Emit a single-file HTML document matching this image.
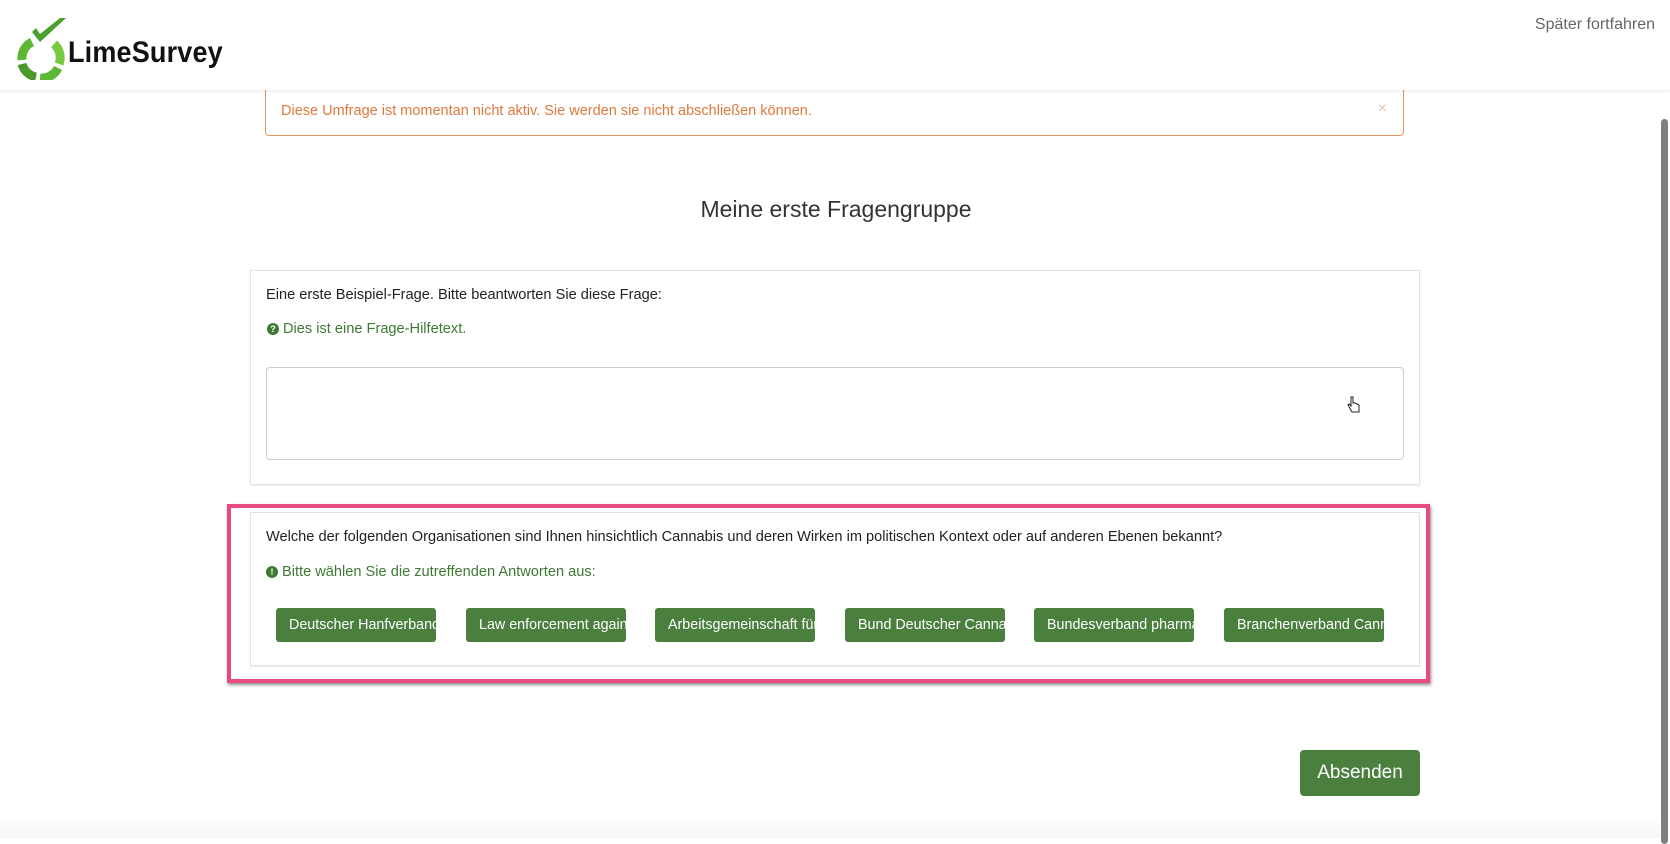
<!DOCTYPE html>
<html><head><meta charset="utf-8"><style>
*{box-sizing:border-box;margin:0;padding:0}
body{width:1670px;height:838px;overflow:hidden;background:#fff;font-family:"Liberation Sans",sans-serif;color:#333;position:relative}
.abs{position:absolute}
.header{left:0;top:0;width:1670px;height:90px;background:#fff;box-shadow:0 2px 3px rgba(0,0,0,0.06);z-index:2}
.logo-t{left:68px;top:36px;font-size:30px;color:#111;letter-spacing:0.2px;font-weight:bold;transform:scaleX(0.9);transform-origin:left}
.later{right:15px;top:16px;font-size:16px;color:#666}
.alert{left:265px;top:88px;width:1139px;height:48px;border:1px solid #e8945e;border-top:none;border-radius:0 0 4px 4px;color:#e0793e;font-size:14.5px;padding:15px 15px}
.alert .x{position:absolute;right:16px;top:12px;color:#e8c8b6;font-size:16px}
h1{position:absolute;left:0;width:1672px;top:196px;text-align:center;font-weight:normal;font-size:23px;color:#333}
.card{border:1px solid #e2e2e2;box-shadow:0 1px 2px rgba(0,0,0,0.08);background:#fff}
.q{font-size:14.6px;color:#222}
.help{font-size:14.6px;color:#3e7a34}
.ic{display:inline-block;width:12px;height:12px;border-radius:50%;background:#3e7a34;color:#fff;font-size:9px;font-weight:bold;text-align:center;line-height:12px;vertical-align:1px;margin-right:4px}
.ta{left:266px;top:367px;width:1138px;height:93px;border:1px solid #ccc;border-radius:4px}
.pink{left:227px;top:504px;width:1203px;height:179px;border:4px solid #e84a84;box-shadow:1px 2px 3px rgba(0,0,0,0.45)}
.btn{position:absolute;top:608px;height:34px;width:160px;background:#4a7f3e;color:#fff;font-size:14.3px;border-radius:3px;padding:9px 0 0 13px;white-space:nowrap;overflow:hidden}
.send{left:1300px;top:750px;width:120px;height:46px;background:#4a7f3e;color:#fff;border-radius:4px;font-size:19px;text-align:center;line-height:46px}
.sb{left:1661px;top:119px;width:7px;height:725px;background:#7f7f7f;border-radius:4px}
.fade{left:0;top:815px;width:1660px;height:23px;background:linear-gradient(#fff,#f6f6f6)}
</style></head><body>
<div class="abs header">
<svg class="abs" style="left:12px;top:14px" width="60" height="66" viewBox="0 0 60 66">
<path d="M20 18 L28 28 L54 4 L48 4 L28 20 L24 14 Z" fill="#4aa02c"/>
<g fill="none" stroke="#5cb832" stroke-width="9">
<path d="M20 28 A18 18 0 0 0 10 46"/>
<path d="M10 50 A18 18 0 0 0 24 63" stroke="#4a9a2a"/>
<path d="M28 64 A18 18 0 0 0 46 54"/>
<path d="M47 50 A18 18 0 0 0 42 30" stroke="#7ac943"/>
</g></svg>
<div class="abs logo-t">LimeSurvey</div>
<div class="abs later">Später fortfahren</div>
</div>
<div class="abs alert">Diese Umfrage ist momentan nicht aktiv. Sie werden sie nicht abschließen können.<span class="x">×</span></div>
<h1>Meine erste Fragengruppe</h1>
<div class="abs card" style="left:250px;top:270px;width:1170px;height:215px"></div>
<div class="abs q" style="left:266px;top:287px">Eine erste Beispiel-Frage. Bitte beantworten Sie diese Frage:</div>
<div class="abs help" style="left:267px;top:321px"><span class="ic">?</span>Dies ist eine Frage-Hilfetext.</div>
<div class="abs ta"></div>
<svg class="abs" style="left:1347px;top:396px" width="14" height="18" viewBox="0 0 14 18"><path d="M4 1 v9 l-2 -2 l-1 1 l4 7 h7 v-7 l-2 -1 l-2 -1 l-2 0 v-6 z" fill="#fff" stroke="#222" stroke-width="1"/></svg>
<div class="abs pink"></div>
<div class="abs card" style="left:250px;top:512px;width:1170px;height:154px"></div>
<div class="abs q" style="left:266px;top:529px">Welche der folgenden Organisationen sind Ihnen hinsichtlich Cannabis und deren Wirken im politischen Kontext oder auf anderen Ebenen bekannt?</div>
<div class="abs help" style="left:266px;top:564px"><span class="ic">!</span>Bitte wählen Sie die zutreffenden Antworten aus:</div>
<div class="btn" style="left:276px">Deutscher Hanfverband</div>
<div class="btn" style="left:466px">Law enforcement against</div>
<div class="btn" style="left:655px">Arbeitsgemeinschaft für</div>
<div class="btn" style="left:845px">Bund Deutscher Cannabis</div>
<div class="btn" style="left:1034px">Bundesverband pharma</div>
<div class="btn" style="left:1224px">Branchenverband Canna</div>
<div class="abs fade"></div>
<div class="abs send">Absenden</div>
<div class="abs sb"></div>
</body></html>
